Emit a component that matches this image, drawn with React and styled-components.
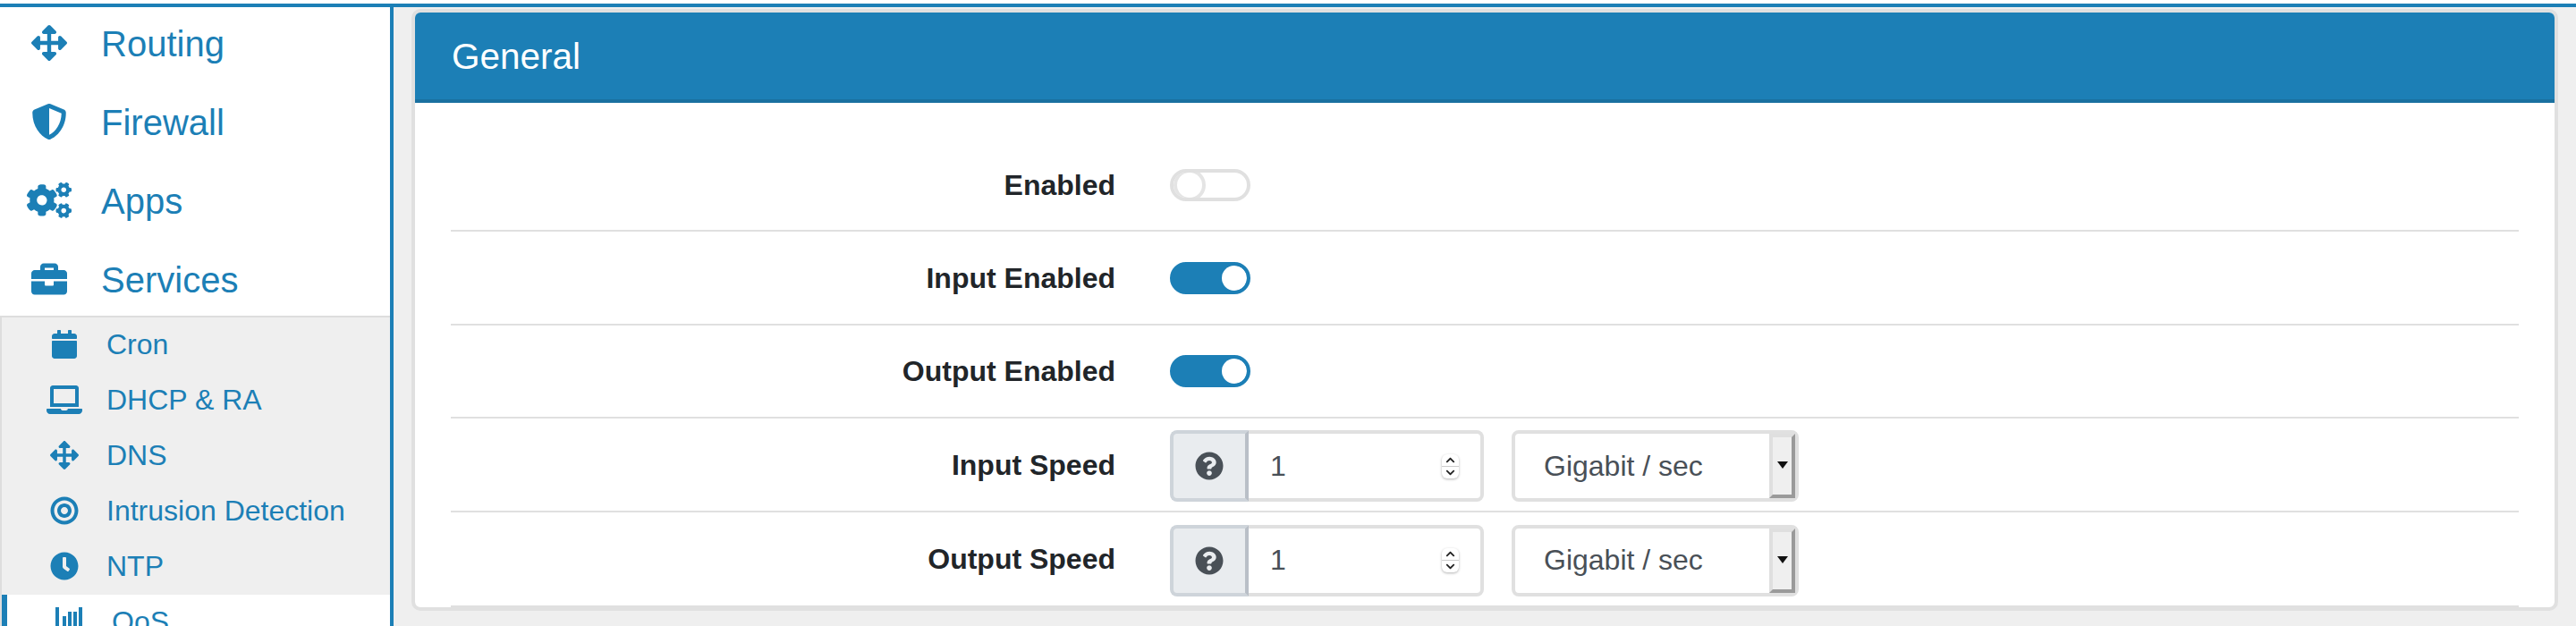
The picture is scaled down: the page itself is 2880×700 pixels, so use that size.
import React from 'react'
import styled, { createGlobalStyle } from 'styled-components'
import {
    FaArrowsAlt,
    FaShieldAlt,
    FaCogs,
    FaBriefcase,
    FaCalendar,
    FaLaptop,
    FaBullseye,
    FaClock,
    FaQuestionCircle,
    FaChevronUp,
    FaChevronDown,
} from 'react-icons/fa'

const BLUE = '#1c7fb6'
const LINE = '#e0e0e0'

const GlobalStyle = createGlobalStyle`
    html, body {
        margin: 0;
        padding: 0;
        background: #fff;
    }
    * {
        box-sizing: border-box;
    }
`

const Page = styled.div`
    width: 2880px;
    height: 700px;
    overflow: hidden;
    padding-top: 4px;
    font-family: 'Liberation Sans', Arial, sans-serif;
    background: #fff;
`

const TopRule = styled.div`
    height: 4px;
    background: ${BLUE};
`

const Columns = styled.div`
    display: flex;
    height: 692px;
`

const Sidebar = styled.nav`
    width: 440px;
    flex: none;
    border-right: 4px solid ${BLUE};
    background: #fff;
    overflow: hidden;
`

const MainItem = styled.a`
    display: flex;
    align-items: center;
    gap: 18px;
    height: 80px;
    margin-bottom: 8px;
    padding-left: 15px;
    color: ${BLUE};
    font-size: 40px;
    &:nth-child(4) {
        margin-bottom: 1px;
    }
`

const MainIcon = styled.span`
    display: flex;
    justify-content: center;
    width: 80px;
    font-size: 40px;
    svg {
        width: ${(p) => (p.$wide ? '1.25em' : '1em')};
        height: 1em;
    }
`

const MainText = styled.span`
    padding-top: 2px;
`

const SubList = styled.div`
    border-top: 2px solid #ddd;
    border-left: 2px solid #ddd;
    background: #efefef;
`

const SubItem = styled.a`
    display: flex;
    align-items: center;
    gap: ${(p) => (p.$active ? '18px' : '17px')};
    height: 62px;
    padding-bottom: 2px;
    padding-left: ${(p) => (p.$active ? '39px' : '40px')};
    border-left: ${(p) => (p.$active ? `6px solid ${BLUE}` : 'none')};
    background: ${(p) => (p.$active ? '#fff' : 'transparent')};
    color: ${BLUE};
    font-size: 32px;
`

const SubIcon = styled.span`
    display: flex;
    justify-content: center;
    width: 60px;
    font-size: 32px;
    svg {
        width: ${(p) => (p.$wide ? '1.25em' : '1em')};
        height: 1em;
    }
`

const Main = styled.main`
    flex: 1;
    padding: 2px 20px 0;
    background: #efefef;
`

const Card = styled.section`
    height: 673px;
    border: 4px solid ${LINE};
    border-radius: 10px;
    background: #fff;
    overflow: hidden;
`

const CardHeader = styled.header`
    display: flex;
    align-items: center;
    height: 101px;
    padding: 2px 0 0 41px;
    border-bottom: 4px solid #1a70a0;
    background: ${BLUE};
    color: #fff;
    font-size: 40.5px;
`

const Form = styled.div`
    margin: 39px 40px 0;
`

const Row = styled.div`
    display: grid;
    grid-template-columns: 743px 1fr;
    column-gap: 61px;
    align-items: center;
    height: ${(p) => p.$h}px;
    padding-top: ${(p) => p.$pad}px;
    border-bottom: 2px solid ${LINE};
`

const Label = styled.label`
    padding-bottom: ${(p) => (p.$raised ? '2px' : '0')};
    color: #212529;
    font-size: 32px;
    font-weight: 700;
    text-align: right;
`

const Toggle = styled.div`
    display: flex;
    justify-content: ${(p) => (p.$on ? 'flex-end' : 'flex-start')};
    width: 90px;
    height: 36px;
    border: 4px solid ${(p) => (p.$on ? BLUE : LINE)};
    border-radius: 18px;
    background: ${(p) => (p.$on ? BLUE : '#fff')};
    overflow: hidden;
`

const Knob = styled.span`
    width: 28px;
    height: 28px;
    margin-left: ${(p) => (p.$on ? '0' : '4px')};
    border-radius: 50%;
    background: #fff;
    box-shadow: ${(p) => (p.$on ? 'none' : `0 0 0 4px #e4e4e4`)};
`

const Controls = styled.div`
    display: flex;
    gap: 31px;
`

const InputGroup = styled.div`
    display: flex;
    width: 351px;
    height: 80px;
`

const Addon = styled.span`
    display: flex;
    align-items: center;
    justify-content: center;
    width: 88px;
    flex: none;
    border: 4px solid #ced4da;
    border-right-color: #b9bfc7;
    border-radius: 8px 0 0 8px;
    background: #e9ecef;
    color: #495057;
    font-size: 32px;
`

const NumberBox = styled.div`
    display: flex;
    align-items: center;
    justify-content: space-between;
    flex: 1;
    padding: 0 24px;
    border: 4px solid ${LINE};
    border-left: none;
    border-radius: 0 8px 8px 0;
    background: #fff;
    color: #495057;
    font-size: 32px;
`

const Spinner = styled.span`
    display: flex;
    flex-direction: column;
    width: 19px;
    height: 27px;
    border-radius: 6px;
    background: #fff;
    box-shadow: 0 1px 3px rgba(0, 0, 0, 0.3);
    color: #222;
    font-size: 11px;
`

const SpinnerPart = styled.span`
    display: flex;
    align-items: center;
    justify-content: center;
    flex: 1;
    &:first-child {
        border-bottom: 1px solid #ccc;
    }
`

const Select = styled.div`
    display: flex;
    align-items: center;
    justify-content: space-between;
    width: 321px;
    height: 80px;
    padding-left: 32px;
    border: 4px solid ${LINE};
    border-radius: 8px;
    background: #fff;
    color: #495057;
    font-size: 32px;
`

const SelectButton = styled.span`
    display: flex;
    align-items: center;
    justify-content: center;
    width: 29px;
    height: 72px;
    border-style: solid;
    border-width: 4px;
    border-color: #dfdfdf #9a9a9a #9a9a9a #dfdfdf;
    background: #efefef;
    &::after {
        content: '';
        margin-bottom: 2px;
        border-top: 8px solid #111;
        border-left: 6px solid transparent;
        border-right: 6px solid transparent;
    }
`

const BarsIcon = () => (
    <svg width="30" height="32" viewBox="0 0 30 32" fill="currentColor" style={{ display: 'block' }}>
        <rect x="0" y="0" width="4" height="32" />
        <rect x="8" y="10" width="4" height="22" />
        <rect x="14" y="5" width="4" height="27" />
        <rect x="20" y="5" width="4" height="27" />
        <rect x="26" y="0" width="4" height="32" />
    </svg>
)

const mainItems = [
    { name: 'Routing', icon: <FaArrowsAlt /> },
    { name: 'Firewall', icon: <FaShieldAlt /> },
    { name: 'Apps', icon: <FaCogs />, wide: true },
    { name: 'Services', icon: <FaBriefcase /> },
]

const subItems = [
    { name: 'Cron', icon: <FaCalendar /> },
    { name: 'DHCP & RA', icon: <FaLaptop />, wide: true },
    { name: 'DNS', icon: <FaArrowsAlt /> },
    { name: 'Intrusion Detection', icon: <FaBullseye /> },
    { name: 'NTP', icon: <FaClock /> },
]

const SpeedControls = () => (
    <Controls>
        <InputGroup>
            <Addon>
                <FaQuestionCircle />
            </Addon>
            <NumberBox>
                <span>1</span>
                <Spinner>
                    <SpinnerPart>
                        <FaChevronUp />
                    </SpinnerPart>
                    <SpinnerPart>
                        <FaChevronDown />
                    </SpinnerPart>
                </Spinner>
            </NumberBox>
        </InputGroup>
        <Select>
            <span>Gigabit / sec</span>
            <SelectButton />
        </Select>
    </Controls>
)

const Switch = ({ on }) => (
    <Toggle $on={on}>
        <Knob $on={on} />
    </Toggle>
)

export default function App() {
    return (
        <Page>
            <GlobalStyle />
            <TopRule />
            <Columns>
                <Sidebar>
                    {mainItems.map((item) => (
                        <MainItem key={item.name}>
                            <MainIcon $wide={item.wide}>{item.icon}</MainIcon>
                            <MainText>{item.name}</MainText>
                        </MainItem>
                    ))}
                    <SubList>
                        {subItems.map((item) => (
                            <SubItem key={item.name}>
                                <SubIcon $wide={item.wide}>{item.icon}</SubIcon>
                                {item.name}
                            </SubItem>
                        ))}
                        <SubItem $active>
                            <SubIcon>
                                <BarsIcon />
                            </SubIcon>
                            QoS
                        </SubItem>
                    </SubList>
                </Sidebar>
                <Main>
                    <Card>
                        <CardHeader>General</CardHeader>
                        <Form>
                            <Row $h={105} $pad={3}>
                                <Label>Enabled</Label>
                                <Switch />
                            </Row>
                            <Row $h={105} $pad={1}>
                                <Label>Input Enabled</Label>
                                <Switch on />
                            </Row>
                            <Row $h={104} $pad={0}>
                                <Label>Output Enabled</Label>
                                <Switch on />
                            </Row>
                            <Row $h={105} $pad={3}>
                                <Label $raised>Input Speed</Label>
                                <SpeedControls />
                            </Row>
                            <Row $h={106} $pad={3}>
                                <Label $raised>Output Speed</Label>
                                <SpeedControls />
                            </Row>
                        </Form>
                    </Card>
                </Main>
            </Columns>
        </Page>
    )
}
